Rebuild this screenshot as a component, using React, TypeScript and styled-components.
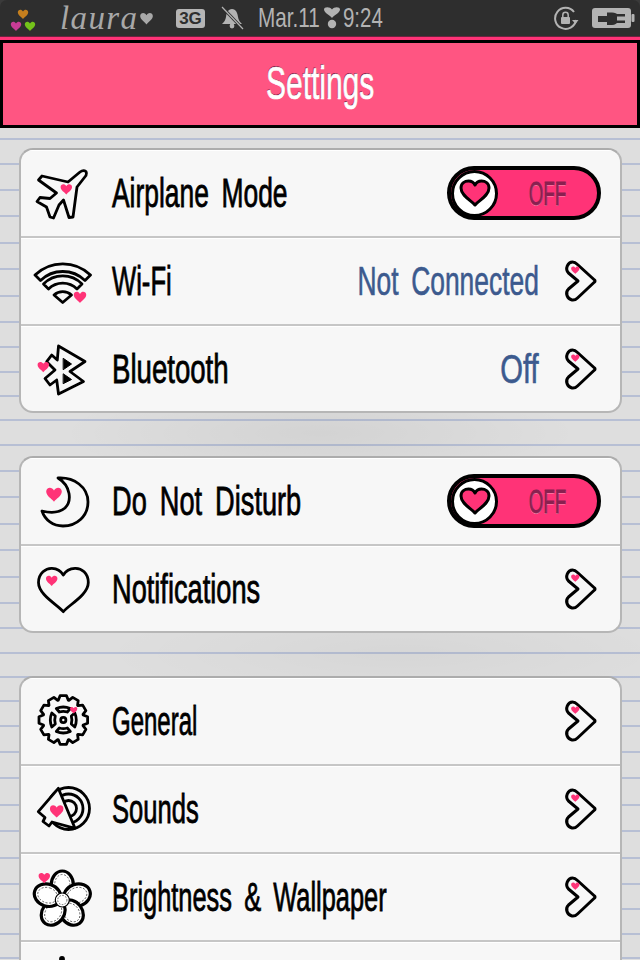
import styled, { createGlobalStyle } from 'styled-components';

const GlobalStyle = createGlobalStyle`
  html, body { margin: 0; padding: 0; background: #3a3a3a; }
  body { width: 640px; height: 960px; overflow: hidden; }
`;

const HAND = `"Liberation Sans", sans-serif`;
const PINK = '#ff3377';

// notebook lines of the wallpaper, in px from the top of the tile
const RULES = [0, 25, 51, 77, 104, 130, 157, 183, 208, 233, 257];
const TILE = 281;
const ruleStops = RULES.map(
  (y) => `transparent ${y + 1}px, #b7bfd4 ${y + 1}px, #b7bfd4 ${y + 3}px, transparent ${y + 3}px`,
).join(', ');

const Screen = styled.div`
  width: 640px;
  height: 960px;
  overflow: hidden;
  display: flex;
  flex-direction: column;
`;

const StatusBar = styled.div`
  height: 36px;
  flex: none;
  background: #2e2e2e;
  border-radius: 7px 7px 0 0;
  display: flex;
  align-items: center;
  padding: 0 5px 0 10px;
  color: #b3b3b3;
`;

const PinkStrip = styled.div`
  height: 4px;
  flex: none;
  background: ${PINK};
  box-shadow: inset 0 1px 0 #6b2440;
`;

const StatusText = styled.div<{ $w: number; $sx: number; $ml: number }>`
  width: ${(p) => p.$w}px;
  margin-left: ${(p) => p.$ml}px;
  flex: none;
  font: 400 28px/36px ${HAND};
  white-space: nowrap;
  transform: scaleX(${(p) => p.$sx});
  transform-origin: left center;
`;

const Signature = styled.div`
  width: 80px;
  margin-left: 22px;
  flex: none;
  font: italic 400 33px/36px "Liberation Serif", serif;
  letter-spacing: 1.4px;
  color: #a8a8a8;
`;

const Badge = styled.div`
  width: 29px;
  height: 19px;
  margin-left: 22px;
  flex: none;
  background: #b5b5b5;
  border-radius: 3px;
  color: #2e2e2e;
  font: 700 17px/19px ${HAND};
  text-align: center;
`;

const StatusIcon = styled.svg<{ $ml: number }>`
  flex: none;
  margin-left: ${(p) => p.$ml}px;
  display: block;
`;

const Spacer = styled.div`
  flex: 1;
`;

const NavBar = styled.div`
  height: 88px;
  flex: none;
  box-sizing: border-box;
  border: 3px solid #000;
  background: #ff5582;
  display: flex;
  align-items: center;
  justify-content: center;
`;

const Title = styled.div`
  font: 400 46px/1 ${HAND};
  color: #fff;
  -webkit-text-stroke: 0.7px #fff;
  text-shadow: -1px -1px 0 #7c1f45;
  transform: scaleX(0.65);
  margin-top: -3px;
`;

const Paper = styled.div`
  flex: 1;
  padding-top: 20px;
  display: flex;
  flex-direction: column;
  gap: 43px;
  background-color: #dedede;
  background-image:
    radial-gradient(ellipse 260px 50px at 320px 305px, rgba(0, 0, 0, 0.05), transparent),
    radial-gradient(ellipse 300px 50px at 400px 525px, rgba(0, 0, 0, 0.035), transparent),
    linear-gradient(to bottom, ${ruleStops}, transparent ${TILE}px);
  background-size: 100% 100%, 100% 100%, 100% ${TILE}px;
  background-position: 0 0, 0 0, 0 9px;
`;

const Card = styled.div<{ $rows: number }>`
  height: ${(p) => p.$rows * 88 + 1}px;
  flex: none;
  box-sizing: border-box;
  margin: 0 18px 0 19px;
  border: 2px solid #b6b6b6;
  border-top-color: #acacac;
  border-radius: 14px;
  background: #f7f7f7;
  overflow: hidden;
`;

const Row = styled.div`
  height: 88px;
  box-sizing: border-box;
  border-bottom: 2px solid #c6c6c6;
  box-shadow: inset 0 1px 0 #fff;
  display: flex;
  align-items: center;
  padding: 0 19px 0 11px;
`;

const IconSlot = styled.svg`
  width: 60px;
  height: 60px;
  flex: none;
  display: block;
  fill: none;
  stroke: #000;
  stroke-width: 2.8;
  stroke-linejoin: round;
  stroke-linecap: round;
`;

const Label = styled.div<{ $sx: number }>`
  flex: 1;
  margin-left: 20px;
  font: 400 40px/1 ${HAND};
  word-spacing: 8px;
  color: #000;
  white-space: nowrap;
  -webkit-text-stroke: 0.8px #000;
  transform: scaleX(${(p) => p.$sx});
  transform-origin: left center;
`;

const Value = styled.div<{ $sx: number }>`
  flex: none;
  margin-right: 22px;
  font: 400 40px/1 ${HAND};
  word-spacing: 8px;
  color: #3c5a8e;
  white-space: nowrap;
  -webkit-text-stroke: 0.6px #3c5a8e;
  transform: scaleX(${(p) => p.$sx});
  transform-origin: right center;
`;

const Chevron = styled.svg`
  width: 40px;
  height: 52px;
  flex: none;
  display: block;
`;

const Switch = styled.div`
  width: 154px;
  height: 54px;
  flex: none;
  box-sizing: border-box;
  border: 4px solid #000;
  border-radius: 27px;
  background: ${PINK};
  display: flex;
  align-items: center;
`;

const Knob = styled.div`
  width: 47px;
  height: 47px;
  flex: none;
  box-sizing: border-box;
  border: 3px solid #000;
  border-radius: 50%;
  background: #fff;
  display: flex;
  align-items: center;
  justify-content: center;
`;

const SwitchText = styled.div`
  flex: 1;
  text-align: center;
  font: 400 34px/1 ${HAND};
  color: #8a2050;
  -webkit-text-stroke: 1px #8a2050;
  text-shadow: 0 1px 0 #ff9dbb;
  transform: scaleX(0.55);
`;

const HEART = 'M0 5C-1.5 3-5.2 1.2-5.2-1.8C-5.2-4.6-1.6-5.4 0-2.6C1.6-5.4 5.2-4.6 5.2-1.8C5.2 1.2 1.5 3 0 5Z';

const PinkHeart = ({ x, y, size }: { x: number; y: number; size: number }) => (
  <path
    d={HEART}
    transform={`translate(${x} ${y}) scale(${size / 10})`}
    fill={PINK}
    stroke="none"
  />
);

const gearPath = () => {
  const cx = 31.3;
  const cy = 29;
  const pts: string[] = [];
  for (let i = 0; i < 12; i++) {
    const a = (i / 12) * Math.PI * 2;
    const w = Math.PI / 12;
    [
      [a - w * 0.95, 20.5],
      [a - w * 0.5, 24.5],
      [a + w * 0.5, 24.5],
      [a + w * 0.95, 20.5],
    ].forEach(([t, r]) => {
      pts.push(`${(cx + r * Math.sin(t)).toFixed(1)} ${(cy - r * Math.cos(t)).toFixed(1)}`);
    });
  }
  return `M${pts.join('L')}Z`;
};

const PlaneIcon = () => (
  <IconSlot viewBox="0 0 60 60">
    <path d="M54 8.5C52 7 50 7.5 48 9L36 19L10 13L6.5 17L24.5 30L18 35.5L8 34.5L5 38.5L14.5 44L18 54L21.5 55L27 42L31.5 37L37 54.5L41 54L45 24L54 12.5C54.6 11 54.6 9.5 54 8.5Z" fill="#f7f7f7" />
    <PinkHeart x={34.3} y={26} size={11} />
  </IconSlot>
);

const WifiIcon = () => (
  <IconSlot viewBox="0 0 60 60" strokeWidth={2.2}>
    <path d="M3 24A40 40 0 0 1 58.5 24L53 29.5A32 32 0 0 0 8.5 29.5Z" />
    <path d="M11.5 33A27 27 0 0 1 50 33L45 38A20 20 0 0 0 16.5 38Z" />
    <path d="M22 44A13 13 0 0 1 39.5 44L30.7 51.5Z" />
    <PinkHeart x={48} y={46} size={12} />
  </IconSlot>
);

const BluetoothIcon = () => (
  <IconSlot viewBox="0 0 60 60">
    <path d="M26.5 7L53 22.5L38 32.5L51.5 42.5L26.5 55L24.7 41L18 46L13 39.5L23 31L14.7 22.7L19.7 16L25.3 21Z" />
    <path d="M31.5 19.5L39.5 25L31.5 30.5Z" fill="#000" strokeWidth={1} />
    <path d="M31.5 35L39.5 40.5L31.5 44.5Z" fill="#000" strokeWidth={1} />
    <PinkHeart x={11.3} y={27.7} size={11} />
  </IconSlot>
);

const MoonIcon = () => (
  <IconSlot viewBox="0 0 60 60">
    <path d="M26 7C42 6 56 16 56 31C56 45 45 55 31 55C21 55 13 49 10 40C18 42 27 42 33 37C40 30 39 15 26 7Z" />
    <PinkHeart x={22} y={23.3} size={15} />
  </IconSlot>
);

const BellHeartIcon = () => (
  <IconSlot viewBox="0 0 60 60">
    <path d="M31.3 52.7C26 46 6.5 36 6.5 23.5C6.5 14 14 9 20 9.3C25 9.5 29 12 31.3 16C33.6 12 38 9.5 43 9.3C49.5 9 56.3 14 56.3 23.5C56.3 36 36.5 46 31.3 52.7Z" />
    <PinkHeart x={19.7} y={21.5} size={11} />
  </IconSlot>
);

const GEAR_CUTS = [0, 90, 180, 270];

const GearIcon = () => (
  <IconSlot viewBox="0 0 60 60" strokeWidth={1.9}>
    <path d={gearPath()} />
    <circle cx={31.3} cy={29} r={2.6} />
    {GEAR_CUTS.map((a) => (
      <path
        key={a}
        transform={`rotate(${a} 31.3 29)`}
        d="M24.3 17.5Q31.3 14.5 38.3 17.5L35.3 21Q31.3 19.8 27.3 21Z"
      />
    ))}
    <PinkHeart x={41.7} y={19} size={7} />
  </IconSlot>
);

const SoundIcon = () => (
  <IconSlot viewBox="0 0 60 60">
    <circle cx={36.5} cy={29.5} r={21} />
    <circle cx={36.5} cy={29.5} r={14.5} />
    <circle cx={36.5} cy={29.5} r={8} />
    <path d="M26.3 9.3L43 49.3L20 43L17 47L11 42.5L13 38.5L6.3 32.7Z" fill="#f7f7f7" />
    <PinkHeart x={24.7} y={32} size={13} />
  </IconSlot>
);

const PETALS = [0, 72, 144, 216, 288];

const FlowerIcon = () => (
  <IconSlot viewBox="0 0 60 60">
    {PETALS.map((a) => (
      <g key={a} transform={`rotate(${a} 30.3 33)`}>
        <ellipse cx={30.3} cy={17.5} rx={11} ry={13.5} fill="#fff" strokeWidth={3.2} />
        <ellipse cx={30.3} cy={17.5} rx={7.6} ry={10} stroke="#444" strokeWidth={0.8} strokeDasharray="2 1.6" strokeLinecap="butt" />
      </g>
    ))}
    <circle cx={30.3} cy={33} r={7} fill="#fff" strokeWidth={1.2} />
    <circle cx={30.3} cy={33} r={4.6} stroke="#444" strokeWidth={0.8} strokeDasharray="1.6 1.4" strokeLinecap="butt" />
    <PinkHeart x={12.3} y={10.7} size={11} />
  </IconSlot>
);

const NextRowIcon = () => (
  <IconSlot viewBox="0 0 60 60">
    <circle cx={30} cy={4} r={1.5} fill="#000" />
  </IconSlot>
);

const Next = () => (
  <Chevron viewBox="0 0 40 52">
    <path
      d="M17 26L7.5 18C3.5 13.5 7 7 11.5 7C13.5 7 15 8 16.5 9.5L33.5 25C34.2 25.6 34.2 26.4 33.5 27L16.5 43C15 44.5 13 45.3 11 45C6.5 44 3.5 38 7.5 34Z"
      fill="#f7f7f7"
      stroke="#000"
      strokeWidth={3}
      strokeLinejoin="round"
    />
    <PinkHeart x={14.3} y={15} size={8} />
  </Chevron>
);

const Toggle = () => (
  <Switch>
    <Knob>
      <svg width="32" height="28" viewBox="0 0 32 28">
        <path
          d="M16 26C13 22 2 17 2 9C2 4 6 2 9.5 2C12.5 2 14.8 3.6 16 6C17.2 3.6 19.5 2 22.5 2C26 2 30 4 30 9C30 17 19 22 16 26Z"
          fill={PINK}
          stroke="#000"
          strokeWidth={3}
          strokeLinejoin="round"
        />
      </svg>
    </Knob>
    <SwitchText>OFF</SwitchText>
  </Switch>
);

const GREY = '#b3b3b3';

const App = () => (
  <Screen>
    <GlobalStyle />
    <StatusBar>
      <StatusIcon $ml={0} width="28" height="28" viewBox="0 0 28 28">
        <path d={HEART} transform="translate(13 10)" fill="#c57f1e" />
        <path d={HEART} transform="translate(6 22)" fill="#c93c95" />
        <path d={HEART} transform="translate(20 22)" fill="#74c21a" />
      </StatusIcon>
      <Signature>laura</Signature>
      <StatusIcon $ml={-1} width="15" height="14" viewBox="-6 -6 12 11.5">
        <path d={HEART} fill="#a8a8a8" />
      </StatusIcon>
      <Badge>3G</Badge>
      <StatusIcon $ml={15} width="24" height="24" viewBox="0 0 24 24">
        <path d="M12 3C8 3 6.5 7 6 11C5.6 14 4 16 2 18L22 18C20 16 18.4 14 18 11C17.5 7 16 3 12 3Z" fill={GREY} />
        <circle cx={12} cy={20} r={2.4} fill={GREY} />
        <path d="M2 1L23 23" stroke="#2e2e2e" strokeWidth={3} />
        <path d="M2 1L23 23" stroke={GREY} strokeWidth={1.2} />
      </StatusIcon>
      <StatusText $w={60} $ml={14} $sx={0.74}>Mar.11</StatusText>
      <StatusIcon $ml={6} width="16" height="22" viewBox="0 0 16 22">
        <path d="M8 11C7 9 0 6 0 2.5C0 -.5 6 -.5 8 2.5C10 -.5 16 -.5 16 2.5C16 6 9 9 8 11Z" fill={GREY} />
        <circle cx={8} cy={17} r={4.2} fill={GREY} />
      </StatusIcon>
      <StatusText $w={39} $ml={3} $sx={0.73}>9:24</StatusText>
      <Spacer />
      <StatusIcon $ml={0} width="26" height="24" viewBox="0 0 26 24">
        <path d="M23 14A10.5 10.5 0 1 1 21 6" fill="none" stroke={GREY} strokeWidth={2} />
        <path d="M19 14L25.5 14L22.5 18Z" fill={GREY} />
        <rect x={8} y={11} width={9} height={7} rx={1} fill={GREY} />
        <path d="M9.8 11V9A2.7 2.7 0 0 1 15.2 9V11" fill="none" stroke={GREY} strokeWidth={1.5} />
      </StatusIcon>
      <StatusIcon $ml={13} width="43" height="20" viewBox="0 0 43 20">
        <rect x={0} y={0} width={39} height={20} rx={3} fill={GREY} />
        <rect x={39.5} y={6} width={3} height={8} rx={1} fill={GREY} />
        <path d="M6 8H15V14H6ZM15 4.5H20C23 4.5 25 6 25 6H33V8.5H25V12.5H33V15H25C25 15 23 17 20 17H15Z" fill="#2e2e2e" />
      </StatusIcon>
    </StatusBar>
    <PinkStrip />
    <NavBar>
      <Title>Settings</Title>
    </NavBar>
    <Paper>
      <Card $rows={3}>
        <Row>
          <PlaneIcon />
          <Label $sx={0.66}>Airplane Mode</Label>
          <Toggle />
        </Row>
        <Row>
          <WifiIcon />
          <Label $sx={0.64}>Wi-Fi</Label>
          <Value $sx={0.66}>Not Connected</Value>
          <Next />
        </Row>
        <Row>
          <BluetoothIcon />
          <Label $sx={0.69}>Bluetooth</Label>
          <Value $sx={0.73}>Off</Value>
          <Next />
        </Row>
      </Card>
      <Card $rows={2}>
        <Row>
          <MoonIcon />
          <Label $sx={0.68}>Do Not Disturb</Label>
          <Toggle />
        </Row>
        <Row>
          <BellHeartIcon />
          <Label $sx={0.68}>Notifications</Label>
          <Next />
        </Row>
      </Card>
      <Card $rows={4}>
        <Row>
          <GearIcon />
          <Label $sx={0.6}>General</Label>
          <Next />
        </Row>
        <Row>
          <SoundIcon />
          <Label $sx={0.64}>Sounds</Label>
          <Next />
        </Row>
        <Row>
          <FlowerIcon />
          <Label $sx={0.635}>Brightness &amp; Wallpaper</Label>
          <Next />
        </Row>
        <Row>
          <NextRowIcon />
        </Row>
      </Card>
    </Paper>
  </Screen>
);

export default App;
